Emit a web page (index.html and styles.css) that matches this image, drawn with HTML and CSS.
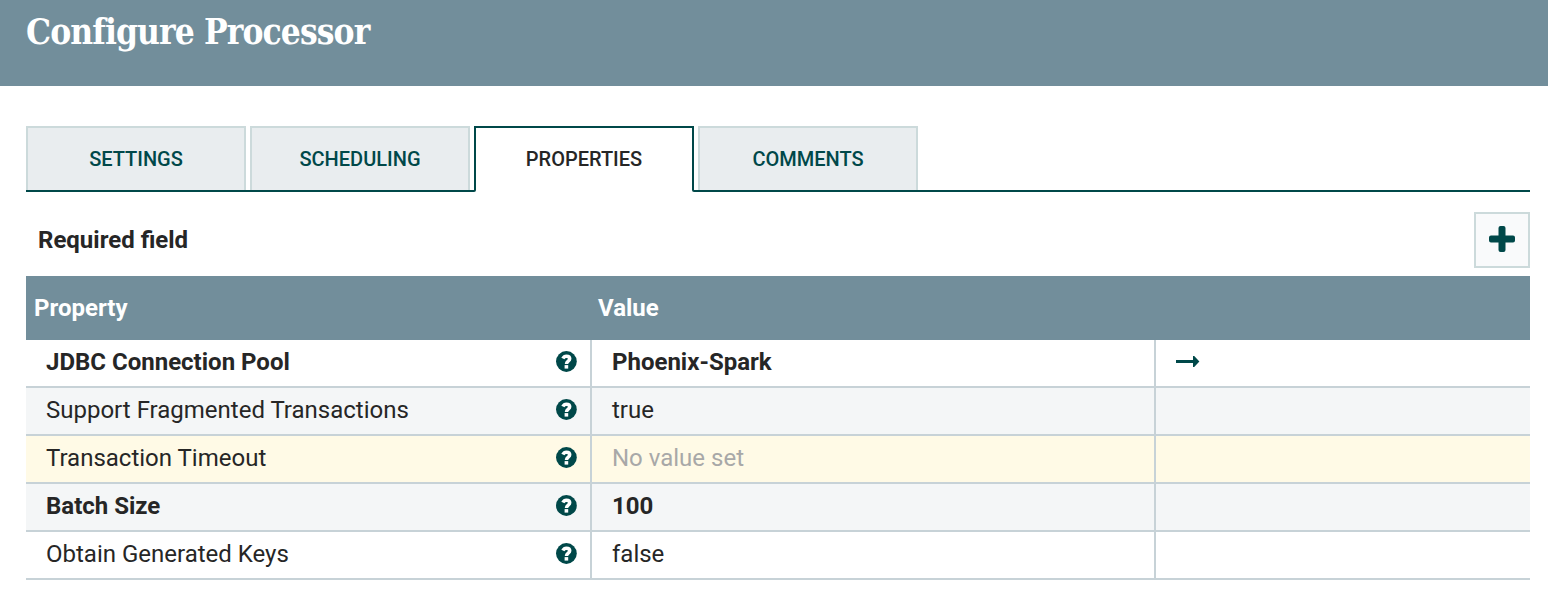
FILE: index.html
```html
<!DOCTYPE html>
<html lang="en">
<head>
<meta charset="utf-8">
<title>Configure Processor</title>
<link rel="stylesheet" href="styles.css">
</head>
<body>
<svg class="defs" width="0" height="0" aria-hidden="true">
  <symbol id="help" viewBox="0 0 21 21">
    <circle cx="10.4" cy="10.5" r="10.4" fill="#004849"/>
    <path d="M6.9 7.6C7.7 5.9 8.8 5.2 10.4 5.2c2 0 3.3 1.1 3.3 2.6 0 2.4-3.2 2.3-3.2 5.1" fill="none" stroke="#fff" stroke-width="3.5"/>
    <path d="M8.6 14.1h3.6v3.5H8.6z" fill="#fff"/>
  </symbol>
</svg>
<header class="dialog-header"><h1 class="title">Configure Processor</h1></header>
<main class="content">
  <nav class="tabs">
    <div class="tab">SETTINGS</div>
    <div class="tab">SCHEDULING</div>
    <div class="tab active">PROPERTIES</div>
    <div class="tab">COMMENTS</div>
  </nav>
  <div class="toolbar">
    <span class="required">Required field</span>
    <button class="add" aria-label="Add property"><svg width="26" height="26" viewBox="0 0 26 26"><path d="M11.5 0h3a2 2 0 0 1 2 2v7.5H24a2 2 0 0 1 2 2v3a2 2 0 0 1-2 2h-7.5V24a2 2 0 0 1-2 2h-3a2 2 0 0 1-2-2v-7.5H2a2 2 0 0 1-2-2v-3a2 2 0 0 1 2-2h7.5V2a2 2 0 0 1 2-2z" fill="#004849"/></svg></button>
  </div>
  <section class="table">
    <div class="head"><span class="head-cell">Property</span><span class="head-cell">Value</span></div>
    <div class="row bold">
      <div class="cell"><span class="name">JDBC Connection Pool</span><svg class="help"><use href="#help"/></svg></div>
      <div class="cell"><span>Phoenix-Spark</span></div>
      <div class="cell"><svg class="arrow" width="24" height="12" viewBox="0 0 24 12"><path d="M0 4h17V0h1.2L23.4 5.5 18.2 11H17V7H0z" fill="#004849"/></svg></div>
    </div>
    <div class="row alt">
      <div class="cell"><span class="name">Support Fragmented Transactions</span><svg class="help"><use href="#help"/></svg></div>
      <div class="cell"><span>true</span></div>
      <div class="cell"></div>
    </div>
    <div class="row hover">
      <div class="cell"><span class="name">Transaction Timeout</span><svg class="help"><use href="#help"/></svg></div>
      <div class="cell"><span class="unset">No value set</span></div>
      <div class="cell"></div>
    </div>
    <div class="row alt bold">
      <div class="cell"><span class="name">Batch Size</span><svg class="help"><use href="#help"/></svg></div>
      <div class="cell"><span>100</span></div>
      <div class="cell"></div>
    </div>
    <div class="row">
      <div class="cell"><span class="name">Obtain Generated Keys</span><svg class="help"><use href="#help"/></svg></div>
      <div class="cell"><span>false</span></div>
      <div class="cell"></div>
    </div>
  </section>
</main>
</body>
</html>
```
FILE: styles.css
```css
* { box-sizing: border-box; }
body { margin: 0; background: #fff; color: #262626; font-family: Roboto, "Liberation Sans", sans-serif; font-size: 24px; }
.defs { display: block; }
.dialog-header { height: 86px; padding: 8px 26px 0; background: #728e9b; }
.title { margin: 0; color: #fff; font: 700 35px/48px "Roboto Slab", "DejaVu Serif Condensed", "DejaVu Serif", serif; font-stretch: condensed; letter-spacing: -0.9px; white-space: nowrap; }
.content { padding: 40px 18px 0 26px; }
.tabs { display: flex; gap: 4px; height: 66px; background: linear-gradient(#004849, #004849) left bottom / 100% 2px no-repeat; }
.tab { width: 220px; height: 64px; border: 2px solid #ccdadb; border-bottom: 0; background: #e9edef; color: #004849; font-size: 20px; line-height: 62px; font-weight: 500; text-align: center; }
.tab.active { position: relative; height: 66px; border-color: #004849; border-left-color: #fff; border-right-color: #fff; background: #fff; color: #262626; }
/* Side edges of the open tab, rounded where they meet the baseline */
.tab.active::before, .tab.active::after { content: ""; position: absolute; top: -2px; bottom: 0; width: 2px; background: #004849; }
.tab.active::before { left: -2px; border-bottom-right-radius: 2px; }
.tab.active::after { right: -2px; border-bottom-left-radius: 2px; }
.toolbar { display: flex; justify-content: space-between; align-items: center; margin-top: 20px; padding-left: 12px; }
.required { font-weight: 700; }
.add { display: flex; align-items: center; justify-content: center; width: 56px; height: 56px; padding: 0 0 2px; border: 2px solid #ccdadb; background: #f9fafb; }
.table { margin-top: 8px; }
.head { display: grid; grid-template-columns: 564px 1fr; height: 64px; padding-left: 8px; background: #728e9b; color: #fff; font-weight: 700; line-height: 64px; }
.row { display: grid; grid-template-columns: 566px 564px 1fr; height: 48px; border-bottom: 2px solid #c7d2d7; line-height: 44px; }
.cell { display: flex; justify-content: space-between; padding: 0 13px 0 20px; border-right: 2px solid #c7d2d7; white-space: nowrap; }
.cell:last-child { border-right: 0; }
.bold { font-weight: 700; }
.alt { background: #f4f6f7; }
.hover { background: #fffae6; }
.unset { color: #a8a8a8; }
.help { width: 21px; height: 21px; margin-top: 11px; }
.arrow { margin-top: 16px; }
```
